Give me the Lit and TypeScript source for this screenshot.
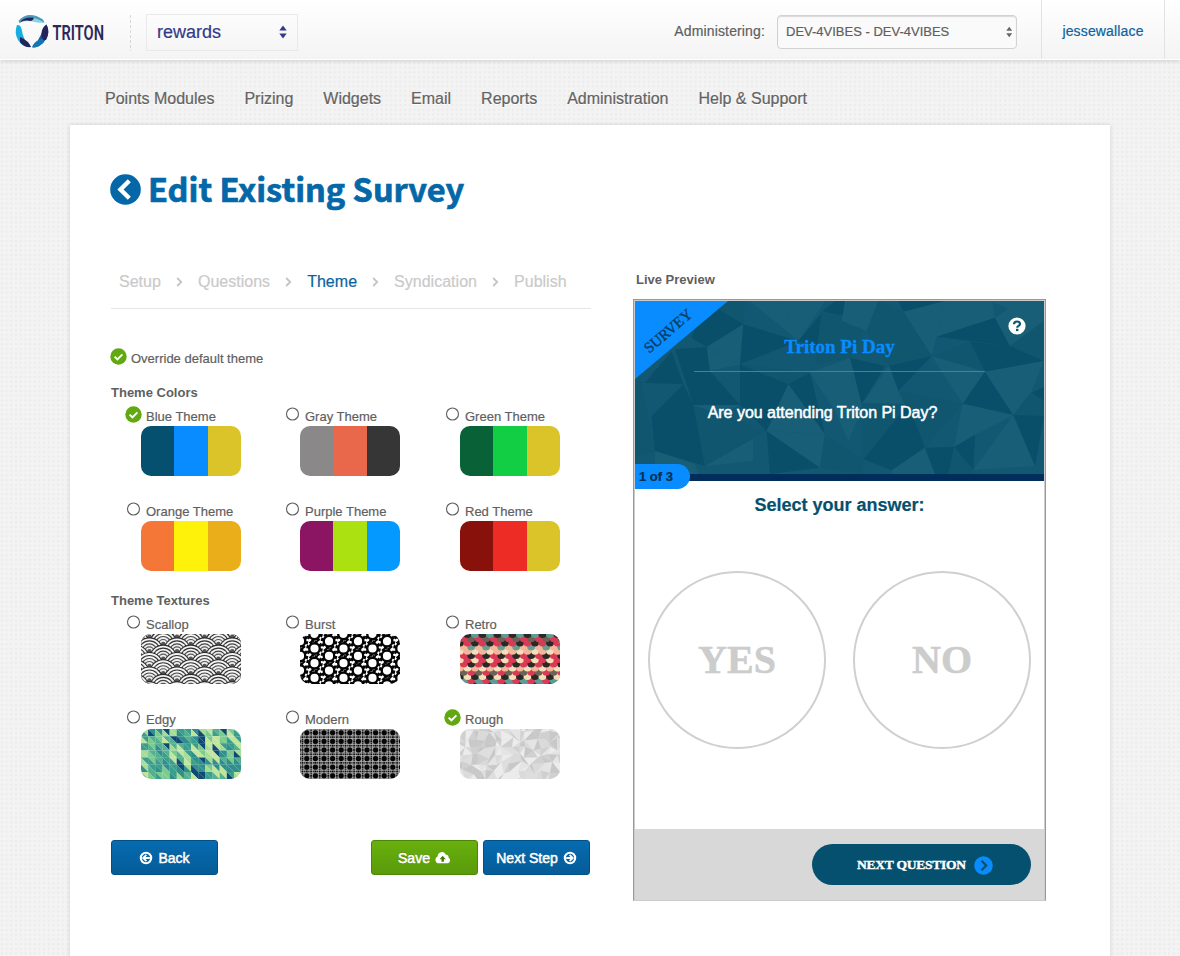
import { LitElement, html, css, svg } from "lit";
import { customElement } from "lit/decorators.js";

const random = (seed: number) => () => {
  seed = (seed * 1664525 + 1013904223) % 4294967296;
  return seed / 4294967296;
};

const check = html`<svg class="check" width="17" height="17" viewBox="0 0 17 17">
  <circle cx="8.5" cy="8.5" r="8.200" fill="#61a90e" />
  <path d="M4.600 8.600l2.800 2.700 5-5" fill="none" stroke="#fff" stroke-width="1.900" />
</svg>`;
const radio = html`<svg class="radio" width="17" height="17" viewBox="0 0 17 17">
  <circle cx="8.500" cy="8" r="6" fill="#fff" stroke="#5c5c5c" stroke-width="1.100" />
</svg>`;
const arrowIcon = (left: boolean) => html`<svg width="14" height="14" viewBox="0 0 14 14">
  <g transform=${left ? "translate(14 0) scale(-1 1)" : ""} fill="none" stroke="#fff" stroke-width="2.100">
    <circle cx="7" cy="7" r="5.200" />
    <path d="M3.200 7h6.200M6.600 3.900L9.800 7l-3.200 3.100" stroke-width="1.800" />
  </g>
</svg>`;
const cloudIcon = html`<svg width="16" height="14" viewBox="0 0 16 14">
  <path d="M4 12.300a3.600 3.600 0 0 1-1.400-6.900A4.400 4.400 0 0 1 11 3.700a2.500 2.500 0 0 1 2.500 3A3 3 0 0 1 12.700 12.300z" fill="#fff" />
  <path d="M7.700 4.800l3.100 3.400H8.900v2.600H6.500V8.200H4.600z" fill="#437d07" />
</svg>`;
const updown = (w: number, h: number, fill: string) => html`<svg width=${w} height=${h} viewBox="0 0 8 14">
  <path d="M.3 5.600L4 .4l3.700 5.200zM.3 8.400L4 13.600l3.700-5.200z" fill=${fill} />
</svg>`;

// Facets of the preview header, as [fill, points] on a 1227x519 canvas.
const D = "#0a4f69", M = "#11566f", L = "#195e77";
const facets: [string, string][] = [
  [M, "0,0 330,0 325,70 315,190 215,138 120,60"],
  [D, "210,0 325,70 215,138 170,110"],
  [D, "120,145 215,138 225,210 315,312 175,312"],
  [L, "215,138 325,70 315,190"],
  [L, "215,138 315,190 225,210"],
  [D, "325,70 490,120 315,190"],
  [L, "345,0 440,0 490,120"],
  [L, "440,0 570,0 490,120"],
  [D, "570,25 600,0 690,0 640,170 490,120"],
  [M, "560,30 700,60 645,170 540,190"],
  [D, "315,190 460,250 315,312"],
  [D, "315,312 460,250 395,390"],
  [M, "315,190 525,215 460,250"],
  [D, "460,250 525,215 570,400"],
  [L, "525,215 645,170 690,305 640,420 600,330"],
  [D, "0,240 30,245 110,150 145,250 20,245"],
  [M, "20,245 60,450 0,470 0,245"],
  [D, "145,250 175,312 50,345"],
  [D, "50,345 175,312 210,495 60,450"],
  [D, "50,345 100,360 60,450"],
  [L, "175,312 315,312 240,350"],
  [M, "175,312 395,390 210,495"],
  [L, "395,390 355,410 355,480 210,495"],
  [L, "60,450 180,490 190,519 60,519"],
  [D, "395,390 405,519 555,500"],
  [L, "395,390 460,250 570,400"],
  [L, "395,390 570,400 555,500"],
  [M, "570,400 685,475 680,519 555,500"],
  [L, "630,0 730,0 695,90 620,60"],
  [M, "730,0 805,32 695,90"],
  [D, "790,0 930,0 805,32"],
  [L, "805,32 930,0 890,165"],
  [M, "695,90 805,32 890,165 762,195"],
  [L, "930,0 1070,0 1080,50 905,107 890,165"],
  [D, "905,107 1080,50 1125,135"],
  [L, "1080,50 1150,0 1227,60 1125,135"],
  [L, "1060,0 1227,0 1227,60"],
  [M, "890,165 1005,122 1050,212"],
  [D, "1005,122 1125,135 1050,212"],
  [M, "1125,135 1227,60 1227,180"],
  [D, "1125,135 1227,180 1050,212"],
  [L, "890,165 1050,212 983,308"],
  [D, "762,195 890,165 790,270"],
  [D, "645,170 750,195 680,310"],
  [L, "762,195 790,270 860,290 820,390 680,310"],
  [M, "790,270 890,290 983,308 870,440"],
  [D, "1050,212 983,308 1135,342"],
  [L, "1050,212 1227,180 1190,270 1135,342"],
  [D, "1190,275 1227,258 1227,300"],
  [M, "1190,275 1227,300 1227,345 1135,342"],
  [L, "983,308 1135,342 1020,402 957,438"],
  [L, "1135,342 1200,495 1015,507"],
  [D, "1135,342 1227,345 1200,495"],
  [D, "957,438 1020,402 1015,507"],
  [D, "820,310 870,440 770,508 685,475 720,420"],
  [M, "680,305 820,310 685,475"],
  [L, "770,508 870,440 900,519 770,519"],
  [D, "870,440 957,438 950,519 900,519"],
  [M, "957,438 1015,507 1010,519 940,519"],
];

const scallop = () => {
  const out = [];
  for (let row = -1; row < 9; row++)
    for (let c = -1; c < 5; c++) {
      const x = c * 27.600 + (row % 2 ? 8.400 : 22.200), y = row * 7.300 + 3;
      for (const [r, f] of [[14, "#2c2c2c"], [12.900, "#f4f4f4"], [11, "#333"], [9.900, "#f6f6f6"], [8, "#444"], [6.900, "#eee"], [5, "#555"], [3.900, "#eee"], [2.200, "#555"]] as [number, string][])
        out.push(svg`<circle cx=${x} cy=${y + 7} r=${r} fill=${f} />`);
    }
  return out;
};
const burst = () => {
  const out = [];
  for (let c = -1; c < 8; c++)
    for (let r = -1; r < 5; r++) {
      const x = c * 14.500, y = r * 14.700 + (c % 2 ? 14.500 : 7.200);
      out.push(svg`<circle cx=${x} cy=${y} r="5.300" fill="none" stroke="#050505" stroke-width="2.400" />
        <circle cx=${x} cy=${y} r="6.900" fill="none" stroke="#050505" stroke-width="2.800" stroke-dasharray="3.100 2.320" />`);
    }
  return out;
};
const retro = () => {
  const rows = [
    ["#5f9a96", "#292927"], ["#d93a55", "#6c6357"], ["#292927", "#d93a55"],
    ["#f2b79a", "#6c9b94"], ["#f4dfb8", "#f2b79a"], ["#d93a55", "#292927"],
    ["#f4dfb8", "#d93a55"], ["#d93a55", "#292927"], ["#f2b79a", "#f4dfb8"],
    ["#6c6357", "#d93a55"], ["#292927", "#f4dfb8"], ["#5f9a96", "#d93a55"], ["#292927", "#5f9a96"],
  ];
  const out = [];
  for (let r = 12; r >= 0; r--)
    for (let c = -1; c < 15; c++)
      out.push(svg`<circle cx=${c * 7.500 + (r % 2 ? 3.700 : 0)} cy=${r * 4.200} r="4" fill=${rows[r][(c + 2) % 2]} />`);
  return out;
};
const edgy = () => {
  const rnd = random(29), p = ["#c2e699", "#a6dc94", "#7bcb8e", "#54b08f", "#2f8f8b", "#0d4a74", "#3b9d8c"];
  const pick = () => p[Math.floor(rnd() * p.length)];
  const out = [];
  const w = 7.150;
  const above: string[] = [];
  for (let r = 0; r < 7; r++)
    for (let c = 0; c < 14; c++) {
      const x = c * w, y = r * w;
      // Half of the cells carry on the colour of the cell above, which draws the slanted streaks.
      const upper = above[c] && rnd() > .45 ? above[c] : pick();
      const lower = pick();
      above[c] = lower;
      out.push(svg`<path d="M${x} ${y}h${w + .1}v${w + .1}z" fill=${upper} /><path d="M${x} ${y}v${w + .1}h${w + .1}z" fill=${lower} />`);
    }
  return out;
};
const modern = () => {
  const out = [svg`<rect width="100" height="50" fill="#060606" />`];
  const p = 8.600;
  for (let c = -1; c < 13; c++) out.push(svg`<path d="M${c * p + 1.200} 0v50M${c * p + 3.800} 0v50" stroke="#ccc" stroke-width=".7" />`);
  for (let r = 0; r < 8; r++) out.push(svg`<path d="M0 ${r * p - 1.800}h100M0 ${r * p + .8}h100" stroke="#ccc" stroke-width=".7" />`);
  for (let c = -1; c < 13; c++)
    for (let r = 0; r < 8; r++) out.push(svg`<circle cx=${c * p + 2.500} cy=${r * p - .5} r="3.100" fill="none" stroke="#ddd" stroke-width=".5" />`);
  return out;
};
const rough = () => {
  const rnd = random(5), g = ["#ececec", "#dedede", "#d0d0d0", "#c8c8c8", "#e4e4e4", "#dadada"];
  const pts: number[][][] = [];
  for (let r = 0; r < 9; r++) {
    pts.push([]);
    for (let c = 0; c < 16; c++) pts[r].push([c * 8 - 8 + rnd() * 6, r * 8 - 8 + rnd() * 6]);
  }
  const out = [svg`<rect width="100" height="50" fill="#dcdcdc" />`];
  for (let r = 0; r < 8; r++)
    for (let c = 0; c < 15; c++) {
      const a = pts[r][c], b = pts[r][c + 1], d = pts[r + 1][c], e = pts[r + 1][c + 1];
      const f1 = g[Math.floor(rnd() * 6)], f2 = g[Math.floor(rnd() * 6)];
      const [t1, t2] = rnd() > .5 ? [[a, b, d], [b, e, d]] : [[a, b, e], [a, e, d]];
      out.push(svg`<polygon points=${t1.join(" ")} fill=${f1} /><polygon points=${t2.join(" ")} fill=${f2} />`);
    }
  return out;
};

const colors: [string, string[]][] = [
  ["Blue Theme", ["#04506e", "#088cff", "#dac429"]],
  ["Gray Theme", ["#8a8889", "#e9674b", "#363636"]],
  ["Green Theme", ["#086137", "#11ce45", "#dac429"]],
  ["Orange Theme", ["#f47738", "#fff20a", "#e9ae19"]],
  ["Purple Theme", ["#8b1463", "#abe011", "#0399ff"]],
  ["Red Theme", ["#88120b", "#ed2d25", "#dac429"]],
];
const textures: [string, () => unknown][] = [
  ["Scallop", scallop], ["Burst", burst], ["Retro", retro],
  ["Edgy", edgy], ["Modern", modern], ["Rough", rough],
];

@customElement("app-root")
export class AppRoot extends LitElement {
  static styles = css`
    :host { display: block; height: 956px; overflow: hidden; font: 13px/20px "Liberation Sans", Arial, sans-serif; color: #5f5f5f; -webkit-text-stroke: .2px;
      background: radial-gradient(circle at 2px 2px, #ebebeb 0, #ebebeb .8px, transparent 1.500px) 0 0 / 4.700px 4.700px, #f3f3f3; }
    * { box-sizing: border-box; }
    svg { display: block; flex: none; }
    .top { height: 60px; display: flex; align-items: center; background: linear-gradient(#fff, #f4f4f4); border-bottom: 1px solid #fff;
      box-shadow: 0 1px 4px rgba(0,0,0,.16); }
    .logo { margin: 5px 0 0 15px; overflow: visible; }
    .dash { width: 1px; height: 36px; margin: 6px 15px 0 20px; background: repeating-linear-gradient(#d6d6d6 0 3px, transparent 3px 5px); }
    .app { width: 152px; height: 37px; margin-top: 5px; border: 1px solid #e9e9e9; display: flex; align-items: center; justify-content: space-between;
      padding: 0 10px 1px; font-size: 18px; color: #34398a; }
    .admin { margin-left: auto; font-size: 14px; padding-top: 3px; letter-spacing: .14px; }
    .station { width: 240px; height: 34px; margin: 5px 24px 0 12px; border: 1px solid #d2d2d2; border-radius: 4px; background: #fafafa;
      box-shadow: inset 0 1px 1px rgba(0,0,0,.13); display: flex; align-items: center; justify-content: space-between; padding: 0 4px 0 8px; font-size: 13px; }
    .user { height: 59px; width: 124px; border: solid #e2e2e2; border-width: 0 1px; display: flex; align-items: center; justify-content: center;
      margin-right: 15px; padding-top: 3px; font-size: 14px; letter-spacing: .15px; color: #0a62a0; }
    .nav { display: flex; gap: 30px; padding: 28px 0 16px 105px; font-size: 16px; line-height: 21px; color: #636363; }
    .nav span { text-shadow: 0 1px #fff; }
    .panel { width: 1040px; height: 840px; margin-left: 70px; background: #fff; box-shadow: 0 0 4px rgba(0,0,0,.15); padding: 44px 0 0 41px; }
    .title { display: flex; align-items: center; gap: 8px; margin: 0 0 0 -1px; height: 40px; font: 700 32.500px/40px "Noto Sans CJK JP", sans-serif; color: #0367a8;
      -webkit-text-stroke: .7px; }
    .title-text { margin-top: -3px; margin-left: -1px; }
    .cols { display: flex; gap: 42px; margin-top: 60px; }
    .left { width: 480px; }
    .crumbs { display: flex; align-items: center; gap: 15px; height: 40px; padding: 0 0 14px 8px; border-bottom: 1px solid #e6e6e6; font-size: 16px; color: #cacaca; letter-spacing: .02px; }
    .here { color: #0a62a0; }
    .row { display: flex; align-items: center; height: 20px; gap: 4px; }
    .row span { padding-top: 2px; }
    .override { margin: 39px 0 15px -1px; }
    .heading { font-weight: 700; height: 20px; margin-bottom: 3px; -webkit-text-stroke: 0; }
    .grid { display: grid; grid-template-columns: 159px 160px 160px; row-gap: 25px; padding-left: 14px; margin-bottom: 20px; }
    .check, .radio { margin-bottom: 4px; }
    .swatch { display: flex; width: 100px; height: 50px; margin-left: 16px; border-radius: 10px; overflow: hidden; }
    .buttons { display: flex; gap: 5px; margin-top: 61px; width: 479px; }
    .btn { width: 107px; height: 35px; border: 1px solid #044f83; border-radius: 3px; background: linear-gradient(#066bb0, #055c98); color: #fff;
      display: flex; align-items: center; justify-content: center; gap: 5px; font-size: 14px; -webkit-text-stroke: .5px #fff; text-shadow: 0 -1px rgba(0,0,0,.25); }
    .save { margin-left: auto; background: linear-gradient(#68b00d, #5a9a0b); border-color: #4c8608; }
    .live { font-weight: 700; padding: 1px 0 0 3px; margin-bottom: 10px; height: 20px; -webkit-text-stroke: 0; }
    .preview { width: 413px; height: 602px; border: 1px solid #999; border-bottom-color: #ccc; padding: 1px 0 0 1px; box-shadow: inset 0 0 0 1px #ccc; }
    .inner { width: 409px; height: 599px; display: flex; flex-direction: column; align-items: stretch; }
    .hero { position: relative; height: 180px; border-bottom: 7px solid #002d5a; display: flex; flex-direction: column; align-items: center; color: #fff; }
    .mesh { position: absolute; inset: 0; }
    .ribbon { position: absolute; left: 0; top: 0; width: 93px; height: 78px; background: #088cff; clip-path: polygon(0 0, 100% 0, 0 100%); }
    .ribbon-text { position: absolute; left: -9px; top: 20px; width: 84px; text-align: center; transform: rotate(-41deg); font: 15px/20px "Liberation Serif", serif; color: #043d62;
      -webkit-text-stroke: .35px; letter-spacing: -.1px; }
    .help { position: absolute; right: 18px; top: 16px; }
    .name { position: relative; margin-top: 35px; font: 700 19px/22px "Liberation Serif", serif; color: #088cff; -webkit-text-stroke: .3px; }
    .rule { position: relative; flex: none; width: 291px; height: 1px; margin: 13px 0 31px; background: #088cff; }
    .ask { position: relative; margin-right: 34px; font-size: 16px; -webkit-text-stroke: .5px #fff; letter-spacing: -.02px; }
    .count { position: absolute; left: 0; top: 163px; width: 55px; height: 25px; border-radius: 0 13px 13px 0; background: #088cff; color: #02304f;
      font-weight: 700; line-height: 25px; padding-left: 4px; }
    .select { margin-top: 12px; text-align: center; font-size: 18px; line-height: 24px; font-weight: 700; color: #04506e; }
    .answers { display: flex; gap: 27px; margin: 54px 0 0 13px; }
    .answer { width: 178px; height: 178px; border: 2px solid #d0d0d0; border-radius: 50%; display: flex; align-items: center; justify-content: center;
      font: 700 40px/40px "Liberation Serif", serif; color: #ccc; -webkit-text-stroke: .5px; }
    .foot { margin-top: auto; height: 71px; background: #d8d8d8; display: flex; justify-content: flex-end; padding: 15px 13px 0 0; }
    .next { width: 219px; height: 41px; border-radius: 20.500px; background: #04506e; display: flex; align-items: center; gap: 8px; padding-left: 45px;
      font: 700 13.500px/20px "Liberation Serif", serif; letter-spacing: -.24px; color: #fff; -webkit-text-stroke: .4px; }
    .next svg { margin-top: 2px; }
  `;

  render() {
    const steps = ["Setup", "Questions", "Theme", "Syndication", "Publish"];
    return html`
      <div class="top">
        <svg class="logo" width="95" height="36" viewBox="0 0 95 36">
          <path d="M3.500 7Q13-4 28 5.500L29.500 9Q17 1 4.500 9z" fill="#4a9bb9" />
          <path d="M5 8.500Q14-1 29.700 9Q23 9 17.500 7.500Q10 6 5 8.500z" fill="#8dd1e6" />
          <path d="M5 8.500Q8 3 18 3.500Q20 5 16 7Q9 5.500 5 8.500z" fill="#25235a" />
          <path d="M2 11Q6 10 7 17Q8 26 16 33Q8 34 3 26Q-1 19 2 11z" fill="#16aee0" />
          <path d="M5 23Q14 27 16 33Q9 34 5 28z" fill="#25235a" />
          <path d="M31.500 10.500Q36 19 29 28Q24 33.500 17.500 33.500Q16.500 31 22 28Q28 17 31.500 10.500z" fill="#0d5f9f" />
          <path d="M31.500 10.500Q35.500 18 31 26Q26 27 26.500 19Q27 13 31.500 10.500z" fill="#25235a" />
          <path d="M17.500 33.500Q19 26 27.500 25L29 28Q24 33.500 17.500 33.500z" fill="#1475b5" />
          <text x="37.500" y="25.500" font-family="Roboto" font-weight="600" font-size="19.500" fill="#2b285c" textLength="51.500" lengthAdjust="spacingAndGlyphs">TRITON</text>
        </svg>
        <div class="dash"></div>
        <div class="app">rewards ${updown(8, 14, "#34398a")}</div>
        <span class="admin">Administering:</span>
        <div class="station">DEV-4VIBES - DEV-4VIBES ${updown(6.500, 12, "#666")}</div>
        <div class="user">jessewallace</div>
      </div>
      <div class="nav">
        ${["Points Modules", "Prizing", "Widgets", "Email", "Reports", "Administration", "Help & Support"].map((t) => html`<span>${t}</span>`)}
      </div>
      <div class="panel">
        <h1 class="title">
          <svg width="31" height="31" viewBox="0 0 31 31"><circle cx="15.500" cy="15.500" r="15.300" fill="#0367a8" />
            <path d="M19.300 6.800L10.500 15.500l8.800 8.700" fill="none" stroke="#fff" stroke-width="4.400" /></svg>
          <span class="title-text">Edit Existing Survey</span>
        </h1>
        <div class="cols">
          <div class="left">
            <div class="crumbs">
              ${steps.map((s, i) => html`
                ${i ? html`<svg width="7" height="10" viewBox="0 0 7 10"><path d="M1.200 1l4 4-4 4" fill="none" stroke="#c4c4c4" stroke-width="1.800" /></svg>` : ""}
                <span class=${s === "Theme" ? "here" : ""}>${s}</span>`)}
            </div>
            <div class="row override">${check}<span>Override default theme</span></div>
            <div class="heading">Theme Colors</div>
            <div class="grid">
              ${colors.map(([n, c], i) => html`<div>
                <div class="row">${i === 0 ? check : radio}<span>${n}</span></div>
                <svg class="swatch" viewBox="0 0 100 50">
                  ${c.map((f, k) => svg`<rect x=${[0, 33, 67][k]} width=${[33, 34, 33][k]} height="50" fill=${f} />`)}
                </svg>
              </div>`)}
            </div>
            <div class="heading">Theme Textures</div>
            <div class="grid">
              ${textures.map(([n, draw], i) => html`<div>
                <div class="row">${i === 5 ? check : radio}<span>${n}</span></div>
                <svg class="swatch" viewBox="0 0 100 50">${draw()}</svg>
              </div>`)}
            </div>
            <div class="buttons">
              <div class="btn">${arrowIcon(true)}<span>Back</span></div>
              <div class="btn save"><span>Save</span>${cloudIcon}</div>
              <div class="btn"><span>Next Step</span>${arrowIcon(false)}</div>
            </div>
          </div>
          <div>
            <div class="live">Live Preview</div>
            <div class="preview"><div class="inner">
              <div class="hero">
                <svg class="mesh" width="409" height="173" viewBox="0 0 1227 519" preserveAspectRatio="none">
                  <rect width="1227" height="519" fill="#135872" />
                  ${facets.map(([f, p]) => svg`<polygon points=${p} fill=${f} />`)}
                </svg>
                <div class="ribbon"><span class="ribbon-text">SURVEY</span></div>
                <svg class="help" width="18" height="18" viewBox="0 0 18 18"><circle cx="9" cy="9" r="8.600" fill="#fff" />
                  <path d="M6 7.300C6 3.500 12.200 3.700 12 7c-.1 1.900-2.800 1.900-2.800 3.700" fill="none" stroke="#10556f" stroke-width="2.200" />
                  <rect x="8" y="11.800" width="2.400" height="2.300" fill="#10556f" /></svg>
                <div class="name">Triton Pi Day</div>
                <div class="rule"></div>
                <div class="ask">Are you attending Triton Pi Day?</div>
                <div class="count">1 of 3</div>
              </div>
              <div class="select">Select your answer:</div>
              <div class="answers"><div class="answer">YES</div><div class="answer">NO</div></div>
              <div class="foot"><div class="next"><span>NEXT QUESTION</span>
                <svg width="19" height="19" viewBox="0 0 19 19"><circle cx="9.500" cy="9.500" r="9.300" fill="#088cff" />
                  <path d="M7.500 4.800l4.700 4.700-4.700 4.700" fill="none" stroke="#04506e" stroke-width="2.200" /></svg>
              </div></div>
            </div></div>
          </div>
        </div>
      </div>`;
  }
}
